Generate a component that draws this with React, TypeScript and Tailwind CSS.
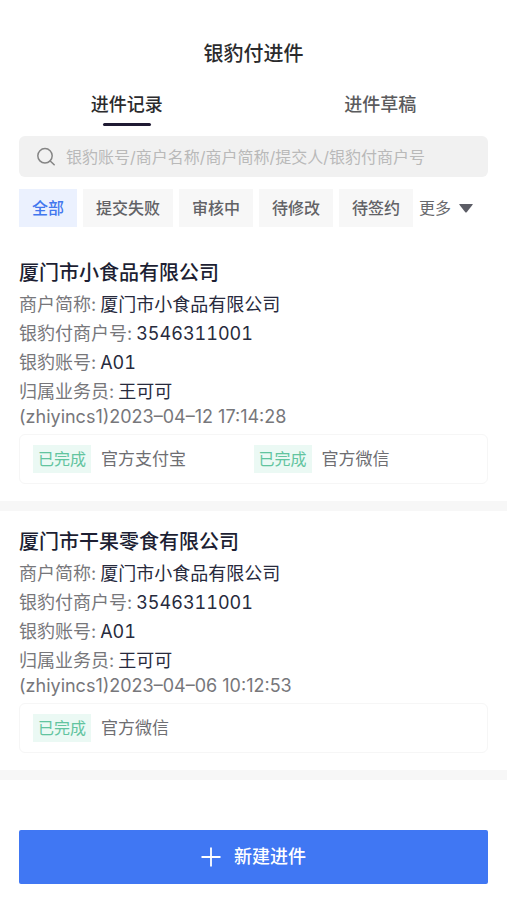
import { useState } from "react";

type Channel = { status: string; name: string };

type Merchant = {
  id: number;
  company: string;
  fields: { label: string; value: string }[];
  time: string;
  channels: Channel[];
};

const tabs = ["进件记录", "进件草稿"];

const filters = ["全部", "提交失败", "审核中", "待修改", "待签约"];

const merchants: Merchant[] = [
  {
    id: 1,
    company: "厦门市小食品有限公司",
    fields: [
      { label: "商户简称:", value: "厦门市小食品有限公司" },
      { label: "银豹付商户号:", value: "3546311001" },
      { label: "银豹账号:", value: "A01" },
      { label: "归属业务员:", value: "王可可" },
    ],
    time: "(zhiyincs1)2023–04–12 17:14:28",
    channels: [
      { status: "已完成", name: "官方支付宝" },
      { status: "已完成", name: "官方微信" },
    ],
  },
  {
    id: 2,
    company: "厦门市干果零食有限公司",
    fields: [
      { label: "商户简称:", value: "厦门市小食品有限公司" },
      { label: "银豹付商户号:", value: "3546311001" },
      { label: "银豹账号:", value: "A01" },
      { label: "归属业务员:", value: "王可可" },
    ],
    time: "(zhiyincs1)2023–04–06 10:12:53",
    channels: [{ status: "已完成", name: "官方微信" }],
  },
];

function SearchIcon() {
  return (
    <svg className="size-5 shrink-0" viewBox="0 0 20 20" fill="none" stroke="#858585" strokeWidth="1.5" strokeLinecap="round">
      <circle cx="9" cy="8.8" r="7.2" />
      <path d="M14.2 14 18.2 17.8" />
    </svg>
  );
}

function MerchantCard({ merchant }: { merchant: Merchant }) {
  return (
    <article className="border-b-10 border-[#f7f7f7] px-[19px] py-[17px]">
      <h2 className="mb-[3px] text-[20px] leading-7 font-medium text-[#1d1f33]">{merchant.company}</h2>
      <dl>
        {merchant.fields.map((field) => (
          <div key={field.label} className="flex gap-1 text-[18px] leading-[29px]">
            <dt className="text-[#77777b]">{field.label}</dt>
            <dd className="text-[#272a3d] tabular-nums">{field.value}</dd>
          </div>
        ))}
      </dl>
      <p className="text-[18px] leading-[22px] text-[#77777b]">{merchant.time}</p>
      <ul className="mt-[6px] grid grid-cols-2 rounded-md border border-[#f6f6f6] px-[13px] py-[10px]">
        {merchant.channels.map((channel) => (
          <li key={channel.name} className="flex items-center gap-[10px]">
            <span className="bg-[#ebf9f4] px-[5px] text-[16px] leading-7 text-[#62c49f]">{channel.status}</span>
            <span className="text-[17px] leading-7 text-[#6e6e72]">{channel.name}</span>
          </li>
        ))}
      </ul>
    </article>
  );
}

export default function App() {
  const [tab, setTab] = useState(tabs[0]);
  const [filter, setFilter] = useState(filters[0]);

  return (
    <div className="flex min-h-screen flex-col bg-white pb-4 font-['Inter','Noto_Sans_CJK_SC',sans-serif]">
      <header>
        <h1 className="pt-8 text-center text-[20px] leading-[44px] font-medium text-[#2b2b2d]">银豹付进件</h1>
        <div role="tablist" className="grid grid-cols-2">
          {tabs.map((name) => (
            <button
              key={name}
              type="button"
              role="tab"
              aria-selected={tab === name}
              onClick={() => setTab(name)}
              className={`flex flex-col items-center gap-1 pt-[15px] text-[18px] leading-7 font-medium ${
                tab === name ? "text-[#2b2b2d]" : "text-[#5b5b5d]"
              }`}
            >
              {name}
              <span className={`h-[3px] w-12 rounded-full ${tab === name ? "bg-[#1f1a33]" : "bg-transparent"}`} />
            </button>
          ))}
        </div>
      </header>

      <label className="mx-[19px] mt-[10px] flex h-[41px] items-center gap-[10px] rounded-md bg-[#f1f1f1] px-[17px]">
        <SearchIcon />
        <input
          type="search"
          aria-label="搜索"
          placeholder="银豹账号/商户名称/商户简称/提交人/银豹付商户号"
          className="min-w-0 flex-1 bg-transparent text-[16px] text-[#2b2b2d] outline-none placeholder:text-[#b9b9b9]"
        />
      </label>

      <div className="mx-[19px] mt-3 mb-[15px] flex items-center gap-[6px] whitespace-nowrap">
        {filters.map((name) => (
          <button
            key={name}
            type="button"
            onClick={() => setFilter(name)}
            className={`px-[13px] text-[16px] leading-[38px] font-medium ${
              filter === name ? "bg-[#ebf1fe] text-[#4277ee]" : "bg-[#f7f7f7] text-[#626266]"
            }`}
          >
            {name}
          </button>
        ))}
        <button type="button" className="flex items-center gap-2 text-[16px] leading-[38px] text-[#68686c]">
          更多
          <svg className="h-[9px] w-[14px]" viewBox="0 0 14 9" fill="#5c5d66">
            <path d="M0.8 0h12.4q1 0 .4.8L7.7 8.2q-.7.8-1.4 0L.4.8Q-.2 0 .8 0z" />
          </svg>
        </button>
      </div>

      <main>
        {merchants.map((merchant) => (
          <MerchantCard key={merchant.id} merchant={merchant} />
        ))}
      </main>

      <footer className="mt-auto px-[19px]">
        <button
          type="button"
          className="flex w-full items-center justify-center gap-[13px] rounded-xs bg-[#4077f3] text-[18px] leading-[54px] font-medium text-white"
        >
          <svg className="size-5" viewBox="0 0 20 20" fill="none" stroke="currentColor" strokeWidth="1.8">
            <path d="M10 0.5v19M0.5 10h19" />
          </svg>
          新建进件
        </button>
      </footer>
    </div>
  );
}
